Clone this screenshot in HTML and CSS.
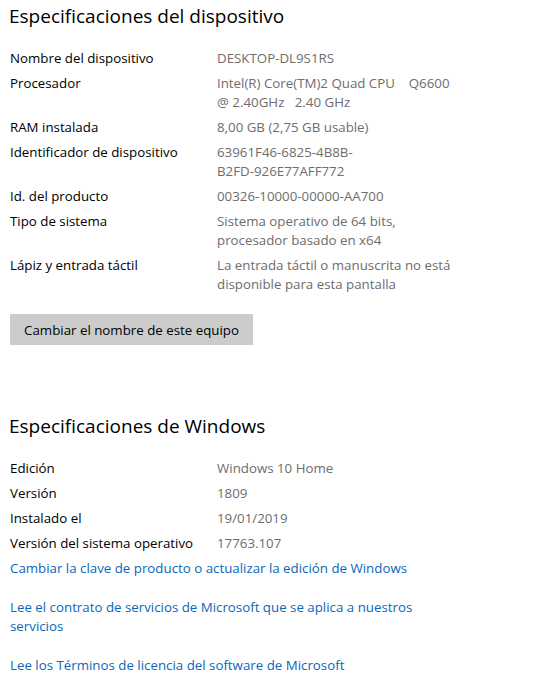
FILE: index.html
```html
<!DOCTYPE html>
<html lang="es">
<head>
  <meta charset="UTF-8">
  <meta name="viewport" content="width=device-width, initial-scale=1.0">
  <title>Acerca de</title>
  <link rel="stylesheet" href="styles.css">
</head>
<body>
  <section class="block">
    <h2>Especificaciones del dispositivo</h2>

    <div class="specs">
      <div class="label">Nombre del dispositivo</div>
      <div class="value">DESKTOP-DL9S1RS</div>

      <div class="label">Procesador</div>
      <div class="value">Intel(R) Core(TM)2 Quad CPU&nbsp;&nbsp;&nbsp;&nbsp;Q6600<br>@ 2.40GHz&nbsp;&nbsp;&nbsp;2.40 GHz</div>

      <div class="label">RAM instalada</div>
      <div class="value">8,00 GB (2,75 GB usable)</div>

      <div class="label">Identificador de dispositivo</div>
      <div class="value">63961F46-6825-4B8B-<br>B2FD-926E77AFF772</div>

      <div class="label">Id. del producto</div>
      <div class="value">00326-10000-00000-AA700</div>

      <div class="label">Tipo de sistema</div>
      <div class="value">Sistema operativo de 64 bits,<br>procesador basado en x64</div>

      <div class="label">Lápiz y entrada táctil</div>
      <div class="value">La entrada táctil o manuscrita no está<br>disponible para esta pantalla</div>
    </div>

    <button class="rename-btn">Cambiar el nombre de este equipo</button>
  </section>

  <section class="block windows">
    <h2>Especificaciones de Windows</h2>

    <div class="specs">
      <div class="label">Edición</div>
      <div class="value">Windows 10 Home</div>

      <div class="label">Versión</div>
      <div class="value">1809</div>

      <div class="label">Instalado el</div>
      <div class="value">19/01/2019</div>

      <div class="label">Versión del sistema operativo</div>
      <div class="value">17763.107</div>
    </div>

    <div class="links">
      <a href="#" class="first">Cambiar la clave de producto o actualizar la edición de Windows</a>
      <a href="#">Lee el contrato de servicios de Microsoft que se aplica a nuestros<br>servicios</a>
      <a href="#">Lee los Términos de licencia del software de Microsoft</a>
    </div>
  </section>
</body>
</html>
```

FILE: styles.css
```css
* {
  box-sizing: border-box;
  margin: 0;
  padding: 0;
}

body {
  background: #ffffff;
  color: #000000;
  font-family: 'Open Sans', 'Noto Sans', sans-serif;
  font-size: 13.3px;
  line-height: 19px;
  padding: 3px 10px 0 10px;
}

h2 {
  font-size: 19px;
  font-weight: 400;
  line-height: 28px;
  margin: -1px 0 0 -1px;
  color: #000;
}

.specs {
  display: grid;
  grid-template-columns: 207px 1fr;
  row-gap: 6px;
  margin-top: 19px;
}

.value {
  color: #6d6d6d;
}

.rename-btn {
  margin-top: 20px;
  width: 243px;
  height: 31px;
  background: #cccccc;
  border: none;
  font-family: inherit;
  font-size: 13.3px;
  color: #000;
  cursor: pointer;
}

.windows {
  margin-top: 68px;
}

.links {
  display: flex;
  flex-direction: column;
  align-items: flex-start;
}

.links a {
  color: #0a67bc;
  text-decoration: none;
  margin-top: 20px;
}

.links a.first {
  margin-top: 6px;
}
```
